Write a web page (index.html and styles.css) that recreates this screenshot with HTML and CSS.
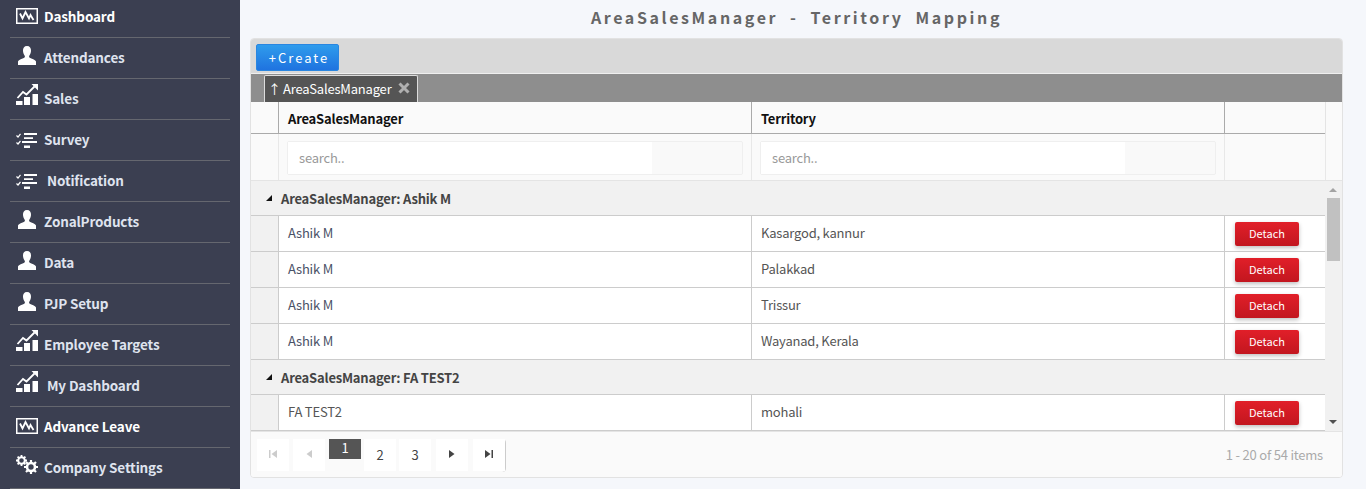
FILE: index.html
```html
<!DOCTYPE html>
<html lang="en">
<head>
<meta charset="utf-8">
<title>AreaSalesManager - Territory Mapping</title>
<link rel="stylesheet" href="styles.css">
</head>
<body>
<svg class="defs" width="0" height="0" aria-hidden="true">
  <defs>
    <symbol id="i-dash" viewBox="0 0 22 16">
      <path fill="none" stroke="currentColor" stroke-width="1.500" d="M.75.75h20.500v14.500H.75z"/>
      <path fill="none" stroke="currentColor" stroke-width="1.800" d="M4 5.500l2.500 5 3-6.500 3.500 6.500 1.500-3.500 3 5"/>
    </symbol>
    <symbol id="i-user" viewBox="0 0 18 19">
      <path fill="currentColor" d="M9 0c2.800 0 4.200 2 4 5-.2 2.200-.9 3.500-1.700 4.700-.5.800-.2 1.800.8 2.300 2.200 1 5.500 1.800 5.900 3.500V19H0v-3.500c.4-1.700 3.700-2.500 5.900-3.500 1-.5 1.300-1.500.8-2.300C5.900 8.500 5.200 7.200 5 5 4.800 2 6.200 0 9 0z"/>
    </symbol>
    <symbol id="i-chart" viewBox="0 0 22 21">
      <path fill="currentColor" d="M0 17h6.500v4H0zM8 13h6v8H8zM16.500 10H22v11h-5.500z"/>
      <path fill="none" stroke="currentColor" stroke-width="1.800" d="M1.500 14l5.500-6 3.500 2.500 8-8"/>
      <path fill="currentColor" d="M15.500 0H22v6.500z"/>
    </symbol>
    <symbol id="i-list" viewBox="0 0 21 15">
      <path fill="none" stroke="currentColor" stroke-width="1.200" d="M.5 2.500l1.500 1.500L4.500.8M.5 9.500L2 11l2.500-3"/>
      <path fill="currentColor" d="M8 0h13v2H8zM8 4.300h9v1.700H8zM6 8h15v2H6zM8 12.500h6V15H8z"/>
    </symbol>
    <symbol id="i-gears" viewBox="0 0 22 19">
      <circle cx="5.500" cy="5.500" r="3.300" fill="none" stroke="currentColor" stroke-width="2"/>
      <path fill="none" stroke="currentColor" stroke-width="1.800" d="M5.500 0v2M5.500 9v2M0 5.500h2M9 5.500h2M1.600 1.600l1.400 1.400M8 8l1.400 1.400M1.600 9.400L3 8M8 3l1.400-1.400"/>
      <circle cx="15" cy="12" r="4" fill="none" stroke="currentColor" stroke-width="2.600"/>
      <path fill="none" stroke="currentColor" stroke-width="2.200" d="M15 5v2.500M15 16.500V19M8 12h2.500M19.500 12H22M10 7l1.800 1.800M18.200 15.200L20 17M10 17l1.800-1.800M18.200 8.800L20 7"/>
    </symbol>
  </defs>
</svg>

<div class="app">
  <nav class="sidebar">
    <a class="nav-item bright"><svg class="ico ico-dash"><use href="#i-dash"/></svg><span>Dashboard</span></a>
    <a class="nav-item"><svg class="ico ico-user"><use href="#i-user"/></svg><span>Attendances</span></a>
    <a class="nav-item"><svg class="ico ico-chart"><use href="#i-chart"/></svg><span>Sales</span></a>
    <a class="nav-item"><svg class="ico ico-list"><use href="#i-list"/></svg><span>Survey</span></a>
    <a class="nav-item"><svg class="ico ico-list"><use href="#i-list"/></svg><span class="shift">Notification</span></a>
    <a class="nav-item"><svg class="ico ico-user"><use href="#i-user"/></svg><span>ZonalProducts</span></a>
    <a class="nav-item"><svg class="ico ico-user"><use href="#i-user"/></svg><span>Data</span></a>
    <a class="nav-item"><svg class="ico ico-user"><use href="#i-user"/></svg><span>PJP Setup</span></a>
    <a class="nav-item"><svg class="ico ico-chart"><use href="#i-chart"/></svg><span>Employee Targets</span></a>
    <a class="nav-item"><svg class="ico ico-chart"><use href="#i-chart"/></svg><span class="shift">My Dashboard</span></a>
    <a class="nav-item bright"><svg class="ico ico-dash"><use href="#i-dash"/></svg><span>Advance Leave</span></a>
    <a class="nav-item"><svg class="ico ico-gears"><use href="#i-gears"/></svg><span>Company Settings</span></a>
  </nav>

  <main class="main">
    <h1 class="title">AreaSalesManager - Territory Mapping</h1>
    <section class="grid">
      <div class="toolbar"><button class="btn-create">+Create</button></div>
      <div class="groupbar">
        <span class="chip"><span class="chip-arrow">&#8593;</span>AreaSalesManager<svg class="chip-x" viewBox="0 0 12 12"><path d="M1.500 1.500l9 9M10.500 1.500l-9 9"/></svg></span>
      </div>

      <div class="head">
        <div class="row head-row">
          <div class="cell"></div>
          <div class="cell th">AreaSalesManager</div>
          <div class="cell th">Territory</div>
          <div class="cell"></div>
          <div class="cell gutter"></div>
        </div>
        <div class="row filter-row">
          <div class="cell"></div>
          <div class="cell fc"><div class="filter"><span class="filter-input">search..</span></div></div>
          <div class="cell fc"><div class="filter"><span class="filter-input">search..</span></div></div>
          <div class="cell"></div>
          <div class="cell"></div>
        </div>
      </div>

      <div class="body">
        <div class="rows">
          <div class="group"><span class="caret"></span>AreaSalesManager: Ashik M</div>
          <div class="row data"><div class="cell"></div><div class="cell td name">Ashik M</div><div class="cell td">Kasargod, kannur</div><div class="cell ac"><button class="btn-detach">Detach</button></div></div>
          <div class="row data"><div class="cell"></div><div class="cell td name">Ashik M</div><div class="cell td">Palakkad</div><div class="cell ac"><button class="btn-detach">Detach</button></div></div>
          <div class="row data"><div class="cell"></div><div class="cell td name">Ashik M</div><div class="cell td">Trissur</div><div class="cell ac"><button class="btn-detach">Detach</button></div></div>
          <div class="row data"><div class="cell"></div><div class="cell td name">Ashik M</div><div class="cell td">Wayanad, Kerala</div><div class="cell ac"><button class="btn-detach">Detach</button></div></div>
          <div class="group group-second"><span class="caret"></span>AreaSalesManager: FA TEST2</div>
          <div class="row data"><div class="cell"></div><div class="cell td">FA TEST2</div><div class="cell td">mohali</div><div class="cell ac"><button class="btn-detach">Detach</button></div></div>
        </div>
        <div class="scrollbar">
          <span class="arrow-up"></span>
          <span class="thumb"></span>
          <span class="arrow-down"></span>
        </div>
      </div>

      <div class="pager">
        <div class="pages">
          <a class="pg off"><svg viewBox="0 0 10 10"><path d="M1 1h1.500v8H1zM9 1v8L3.500 5z"/></svg></a>
          <a class="pg off"><svg viewBox="0 0 10 10"><path d="M8 1v8L2.500 5z"/></svg></a>
          <a class="pg cur">1</a>
          <a class="pg">2</a>
          <a class="pg">3</a>
          <a class="pg"><svg viewBox="0 0 10 10"><path d="M2 1v8l5.500-4z"/></svg></a>
          <a class="pg"><svg viewBox="0 0 10 10"><path d="M1 1v8l5.500-4zM7.500 1H9v8H7.500z"/></svg></a>
        </div>
        <div class="info">1 - 20 of 54 items</div>
      </div>
    </section>
  </main>
</div>
</body>
</html>
```

FILE: styles.css
```css
* { box-sizing: border-box; }
html, body { margin: 0; height: 100%; overflow: hidden; }
body {
  background: #f5f7fb;
  font-family: "Noto Sans CJK SC", "Noto Sans", sans-serif;
  font-size: 13px;
  letter-spacing: -.2px;
  color: #444;
}
.defs { display: block; height: 0; }
.app { display: flex; height: 489px; overflow: hidden; }

.sidebar {
  width: 240px;
  flex: none;
  background: #3b3f51;
  padding: 0 10px;
  overflow: hidden;
}
.nav-item {
  display: block;
  height: 41px;
  border-bottom: 1px solid #65676f;
  color: #dfe3ee;
  font-weight: 700;
  font-size: 13.5px;
  letter-spacing: -.15px;
  position: relative;
}
.nav-item:first-child { margin-top: -3px; }
.nav-item.bright { color: #fff; }
.nav-item span { position: absolute; left: 34px; top: 50%; transform: translateY(-50%); margin-top: -1px; line-height: 16px; white-space: nowrap; }
.nav-item span.shift { left: 37px; }
.ico { position: absolute; color: #fff; }
.ico-dash { left: 6px; top: calc(50% - 9px); width: 22px; height: 16px; }
.ico-user { left: 8px; top: calc(50% - 12px); width: 18px; height: 19px; }
.ico-chart { left: 6px; top: calc(50% - 15px); width: 22px; height: 21px; }
.ico-list { left: 6px; top: calc(50% - 7px); width: 21px; height: 15px; }
.ico-gears { left: 6px; top: calc(50% - 13px); width: 22px; height: 19px; }

.main {
  flex: 1;
  min-width: 0;
  padding: 0 23px 0 10px;
}
.title {
  margin: 0;
  height: 38px;
  line-height: 34px;
  text-align: center;
  font-size: 16px;
  font-weight: 600;
  letter-spacing: 2.6px;
  word-spacing: 5.700px;
  color: #666;
}
.grid {
  height: 440px;
  border: 1px solid #e2e2e2;
  border-radius: 4px;
  background: #fafafa;
  display: flex;
  flex-direction: column;
  overflow: hidden;
}
.toolbar {
  height: 35px;
  flex: none;
  background: #d9d9d9;
  padding: 5px;
  border-bottom: 1px solid #efefef;
}
.btn-create {
  display: block;
  width: 83px;
  height: 27px;
  border: 1px solid #2a86e0;
  border-radius: 2px;
  background: linear-gradient(#2f9cec, #1f73e0);
  color: #fff;
  font: 400 13px/23px "Noto Sans CJK SC", sans-serif;
  letter-spacing: 2px;
  padding: 0 0 0 3px;
}
.groupbar {
  height: 28px;
  flex: none;
  background: #8e8e8e;
  padding: 1px 0 0 13px;
}
.chip {
  display: inline-flex;
  align-items: center;
  width: 154px;
  height: 27px;
  background: #555;
  border: 1px solid #ddd;
  border-bottom: 0;
  border-radius: 2px 2px 0 0;
  color: #fff;
  padding-left: 3px;
  padding-bottom: 2px;
}
.chip-arrow { width: 15px; font-size: 13px; font-weight: 400; }
.chip-x { width: 12px; height: 12px; margin-left: 7px; stroke: #b0b0b0; stroke-width: 3; fill: none; flex: none; }

.row {
  display: grid;
  grid-template-columns: 27px 473px 473px 101px;
}
.head { flex: none; background: #fafafa; }
.head-row { height: 32px; width: 1092px; grid-template-columns: 27px 473px 473px 101px 18px; grid-auto-rows: 32px; }
.head-row .cell { border-bottom: 1px solid #aaa; }
.head-row .cell + .cell { border-left: 1px solid #aaa; }
.head-row .cell.gutter { border-bottom: 0; border-left: 1px solid #e4e4e4; }
.filter-row { height: 47px; width: 1092px; border-bottom: 1px solid #e4e4e4; grid-template-columns: 27px 473px 473px 101px 18px; }
.filter-row .cell + .cell { border-left: 1px solid #e8e8e8; }
.th {
  font-weight: 700;
  color: #111;
  padding: 3px 0 0 9px;
  line-height: 28px;
}
.fc { padding: 7px 8px 0; }
.filter {
  width: 456px;
  height: 34px;
  border: 1px solid #efefef;
  border-radius: 2px;
  background: #f9f9f9;
}
.filter-input {
  display: block;
  width: 364px;
  height: 32px;
  background: #fff;
  line-height: 31px;
  padding-left: 11px;
  color: #999;
}

.body { flex: 1; min-height: 0; display: flex; background: #fff; overflow: hidden; border-bottom: 1px solid #e4e4e4; }
.rows { width: 1074px; flex: none; overflow: hidden; }
.group {
  height: 35px;
  background: #f1f1f1;
  border-bottom: 1px solid #ccc;
  font-weight: 700;
  line-height: 35px;
  color: #444;
  padding-left: 15px;
  display: flex;
  align-items: center;
}
.group-second { line-height: 37px; }
.caret {
  width: 0;
  height: 0;
  border-style: solid;
  border-width: 0 0 6px 6px;
  border-color: transparent transparent #111 transparent;
  margin-right: 9px;
}
.data { height: 36px; border-bottom: 1px solid #ccc; }
.data .cell:first-child { background: #f1f1f1; }
.data .cell + .cell { border-left: 1px solid #ccc; }
.td { line-height: 33px; padding-left: 9px; color: #555; }
.td.name { color: #4a5166; }
.ac { padding: 6px 0 0 10px; }
.btn-detach {
  display: block;
  width: 64px;
  height: 24px;
  border: 0;
  border-radius: 2px;
  background: linear-gradient(#e11f29, #c2161f);
  box-shadow: 0 2px 4px rgba(0, 0, 0, .25);
  color: #fff;
  font: 400 11px/20px "Noto Sans CJK SC", sans-serif;
  padding: 0 0 2px;
}
.scrollbar {
  width: 18px;
  flex: none;
  background: #f1f1f1;
  position: relative;
}
.thumb { position: absolute; left: 2px; top: 17px; width: 13px; height: 63px; background: #c1c1c1; }
.arrow-up, .arrow-down { position: absolute; left: 4px; width: 0; height: 0; border-style: solid; border-color: transparent; }
.arrow-up { top: 7px; border-width: 0 4px 4px; border-bottom-color: #a3a3a3; }
.arrow-down { bottom: 7px; border-width: 4px 4px 0; border-top-color: #505050; }

.pager {
  height: 45px;
  flex: none;
  background: #fafafa;
  display: flex;
  justify-content: space-between;
  padding: 7px 19px 0 6px;
}
.pages {
  display: flex;
  width: 249px;
  height: 33px;
  border-right: 1px solid #ccc;
  border-radius: 0 4px 4px 0;
}
.pg {
  width: 32px;
  height: 32px;
  margin-left: 4px;
  background: #fff;
  display: flex;
  align-items: center;
  justify-content: center;
  color: #444;
  padding-bottom: 2px;
}
.pg:first-child { margin-left: 0; }
.pg:nth-child(4), .pg:nth-child(5) { margin-left: 3px; }
.pg:nth-child(6), .pg:nth-child(7) { margin-left: 5px; }
.pg svg { width: 10px; height: 10px; fill: #444; }
.pg.off svg { fill: #ccc; }
.pg.cur { background: #555; color: #fff; height: 20px; line-height: 20px; }
.info { color: #aaa; line-height: 32px; }
```
